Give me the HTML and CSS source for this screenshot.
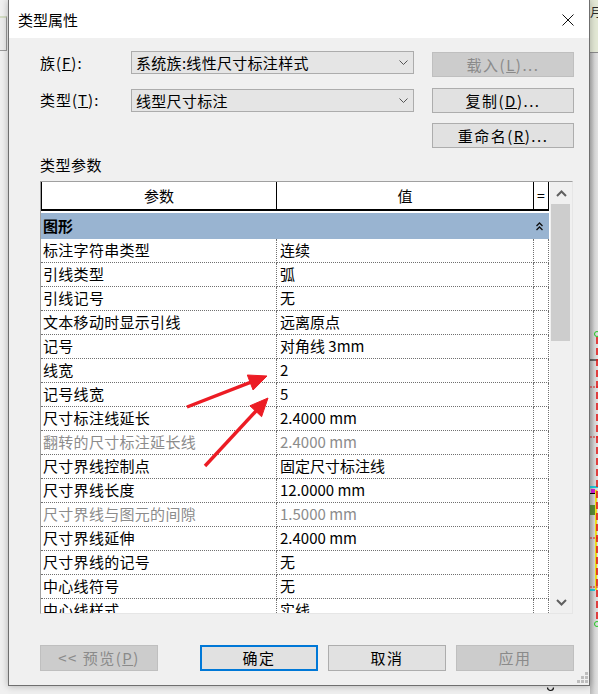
FILE: index.html
```html
<!DOCTYPE html>
<html lang="zh-CN">
<head>
<meta charset="utf-8">
<title>类型属性</title>
<link rel="stylesheet" href="styles.css">
</head>
<body>
<div class="screen">
  <div class="bg-left"><div class="bg-left-box"></div></div>
  <div class="bg-right">
    <div class="bg-right-top"><span class="bg-char">月</span></div>
    <svg class="bg-right-canvas" width="8" height="641" viewBox="0 0 8 641">
      <line x1="0" y1="307" x2="8" y2="307" stroke="#000" stroke-width="1"/>
      <line x1="0" y1="334" x2="8" y2="334" stroke="#e02020" stroke-width="1" stroke-dasharray="2 1"/>
      <line x1="0" y1="384" x2="8" y2="384" stroke="#e02020" stroke-width="1" stroke-dasharray="2 1"/>
      <circle cx="7" cy="281" r="2.5" fill="none" stroke="#22cc22" stroke-width="1"/>
      <rect x="0" y="433" width="8" height="2" fill="#22c8d8"/>
      <rect x="1" y="436" width="4" height="4" fill="#d020d0"/>
      <rect x="0" y="440" width="6" height="1" fill="#000"/>
      <rect x="0" y="452" width="5" height="10" fill="#5a8a3a"/>
      <line x1="6" y1="437" x2="6" y2="537" stroke="#f0e020" stroke-width="2"/>
      <line x1="0" y1="485" x2="8" y2="485" stroke="#e02020" stroke-width="1" stroke-dasharray="2 1"/>
      <line x1="0" y1="534" x2="8" y2="534" stroke="#e02020" stroke-width="1" stroke-dasharray="2 1"/>
      <rect x="0" y="536" width="5" height="2" fill="#22c8d8"/>
      <line x1="7" y1="284" x2="7" y2="568" stroke="#e01818" stroke-width="1.6" stroke-dasharray="7 4"/>
      <circle cx="7" cy="571" r="2.5" fill="none" stroke="#22cc22" stroke-width="1"/>
    </svg>
  </div>
  <svg class="bg-mark" width="9" height="8" viewBox="0 0 9 8"><path d="M1.5 1.5 A3 3 0 1 0 7.5 1.5" fill="none" stroke="#111" stroke-width="1.2"/></svg>

  <div class="dialog">
    <div class="titlebar">
      <span class="title">类型属性</span>
      <svg class="close" width="12" height="12" viewBox="0 0 12 12"><path d="M0.5 0.5 L11.5 11.5 M11.5 0.5 L0.5 11.5" stroke="#111" stroke-width="1" fill="none"/></svg>
    </div>
    <div class="content">
      <div class="form-row">
        <span class="lbl">族(<u>F</u>):</span>
        <div class="combo"><span class="combo-text">系统族:线性尺寸标注样式</span><svg class="chev" width="9" height="5" viewBox="0 0 9 5"><path d="M0.5 0.5 L4.5 4.5 L8.5 0.5" fill="none" stroke="#555" stroke-width="1"/></svg></div>
        <button class="btn btn-row disabled">载入(<u>L</u>)...</button>
      </div>
      <div class="form-row row2">
        <span class="lbl">类型(<u>T</u>):</span>
        <div class="combo"><span class="combo-text">线型尺寸标注</span><svg class="chev" width="9" height="5" viewBox="0 0 9 5"><path d="M0.5 0.5 L4.5 4.5 L8.5 0.5" fill="none" stroke="#555" stroke-width="1"/></svg></div>
        <button class="btn btn-row first">复制(<u>D</u>)...</button>
      </div>
      <div class="form-row row3">
        <button class="btn btn-row col3 first">重命名(<u>R</u>)...</button>
      </div>
      <div class="section-label">类型参数</div>

      <div class="grid">
        <div class="grid-main">
          <div class="grid-head">
            <div class="hcell h1">参数</div>
            <div class="hcell h2">值</div>
            <div class="hcell h3">=</div>
          </div>
          <div class="grid-body">
            <div class="group-row">
              <span class="group-name">图形</span>
              <svg class="collapse" width="7" height="9" viewBox="0 0 7 9"><path d="M0.5 4 L3.5 1 L6.5 4 M0.5 8 L3.5 5 L6.5 8" fill="none" stroke="#111" stroke-width="1.3"/></svg>
            </div>
            <div class="prow"><div class="c1">标注字符串类型</div><div class="c2">连续</div><div class="c3"></div></div>
            <div class="prow"><div class="c1">引线类型</div><div class="c2">弧</div><div class="c3"></div></div>
            <div class="prow"><div class="c1">引线记号</div><div class="c2">无</div><div class="c3"></div></div>
            <div class="prow"><div class="c1">文本移动时显示引线</div><div class="c2">远离原点</div><div class="c3"></div></div>
            <div class="prow"><div class="c1">记号</div><div class="c2">对角线 3mm</div><div class="c3"></div></div>
            <div class="prow"><div class="c1">线宽</div><div class="c2">2</div><div class="c3"></div></div>
            <div class="prow"><div class="c1">记号线宽</div><div class="c2">5</div><div class="c3"></div></div>
            <div class="prow"><div class="c1">尺寸标注线延长</div><div class="c2">2.4000 mm</div><div class="c3"></div></div>
            <div class="prow dim"><div class="c1">翻转的尺寸标注延长线</div><div class="c2">2.4000 mm</div><div class="c3"></div></div>
            <div class="prow"><div class="c1">尺寸界线控制点</div><div class="c2">固定尺寸标注线</div><div class="c3"></div></div>
            <div class="prow"><div class="c1">尺寸界线长度</div><div class="c2">12.0000 mm</div><div class="c3"></div></div>
            <div class="prow dim"><div class="c1">尺寸界线与图元的间隙</div><div class="c2">1.5000 mm</div><div class="c3"></div></div>
            <div class="prow"><div class="c1">尺寸界线延伸</div><div class="c2">2.4000 mm</div><div class="c3"></div></div>
            <div class="prow"><div class="c1">尺寸界线的记号</div><div class="c2">无</div><div class="c3"></div></div>
            <div class="prow"><div class="c1">中心线符号</div><div class="c2">无</div><div class="c3"></div></div>
            <div class="prow"><div class="c1">中心线样式</div><div class="c2">实线</div><div class="c3"></div></div>
          </div>
        </div>
        <div class="vscroll">
          <div class="sbtn"><svg width="11" height="7" viewBox="0 0 11 7"><path d="M1 6 L5.5 1.5 L10 6" fill="none" stroke="#606060" stroke-width="2"/></svg></div>
          <div class="strack"><div class="thumb"></div></div>
          <div class="sbtn"><svg width="11" height="7" viewBox="0 0 11 7"><path d="M1 1 L5.5 5.5 L10 1" fill="none" stroke="#606060" stroke-width="2"/></svg></div>
        </div>
      </div>

      <div class="footer">
        <button class="btn disabled">&lt;&lt; 预览(<u>P</u>)</button>
        <button class="btn default">确定</button>
        <button class="btn">取消</button>
        <button class="btn disabled">应用</button>
      </div>
    </div>
    <svg class="grip" width="11" height="11" viewBox="0 0 11 11" fill="#bdbdbd">
      <rect x="8" y="0" width="3" height="3"/>
      <rect x="4" y="4" width="3" height="3"/><rect x="8" y="4" width="3" height="3"/>
      <rect x="0" y="8" width="3" height="3"/><rect x="4" y="8" width="3" height="3"/><rect x="8" y="8" width="3" height="3"/>
    </svg>
  </div>

  <svg class="arrows" width="598" height="694" viewBox="0 0 598 694">
    <g fill="#ec1c24" stroke="#ec1c24">
      <line x1="187" y1="407" x2="251" y2="382.2" stroke-width="3.4"/>
      <polygon points="267,376 253.1,390 247.3,375" stroke-width="1" stroke-linejoin="round"/>
      <line x1="205" y1="466" x2="256.5" y2="410.5" stroke-width="3.4"/>
      <polygon points="268,398 261.6,416.7 249.9,405.8" stroke-width="1" stroke-linejoin="round"/>
    </g>
  </svg>
</div>
</body>
</html>
```

FILE: styles.css
```css
* { box-sizing: border-box; }

html, body {
  margin: 0;
  padding: 0;
}

body {
  width: 598px;
  height: 694px;
  overflow: hidden;
  background: #eeeeee;
  font-family: "Noto Sans CJK SC", "Microsoft YaHei", sans-serif;
  color: #000;
}

.screen {
  position: relative;
  width: 598px;
  height: 694px;
  overflow: hidden;
  background: #efefef;
}

/* ---------- desktop behind the dialog ---------- */
.bg-left {
  position: absolute;
  left: 0;
  top: 0;
  width: 8px;
  height: 694px;
  background: #f0f0f0;
}

.bg-left-box {
  margin-top: 16px;
  width: 7px;
  height: 35px;
  background: #ececec;
  border-top: 2px solid #d3dcc4;
  border-right: 1px solid #9a9a9a;
  border-bottom: 1px solid #9a9a9a;
}

.bg-right {
  position: absolute;
  left: 590px;
  top: 0;
  width: 8px;
  height: 694px;
  background: linear-gradient(to right, #b8b8b8, #d8d8d8 60%, #e2e2e2);
}

.bg-right-top {
  height: 53px;
  background: #e3e8d5;
  border-bottom: 1px solid #8a8a8a;
  overflow: hidden;
}

.bg-char {
  display: block;
  margin-top: 5px;
  font-size: 12px;
  line-height: 14px;
  color: #2a2a2a;
}

.bg-right-canvas {
  display: block;
}

.bg-mark {
  position: absolute;
  left: 546px;
  top: 686px;
}

/* ---------- dialog ---------- */
.dialog {
  position: absolute;
  left: 8px;
  top: 0;
  width: 582px;
  height: 686px;
  background: #f0f0f0;
  border: 1px solid #6f6f6f;
  border-top: none;
  box-shadow: 0 0 7px rgba(0, 0, 0, 0.28);
  display: flex;
  flex-direction: column;
}

.titlebar {
  height: 38px;
  background: #ffffff;
  display: flex;
  align-items: center;
  padding-left: 9px;
  padding-right: 15px;
}

.title {
  font-size: 15px;
  line-height: 20px;
  margin-top: 1px;
}

.close {
  margin-left: auto;
  margin-top: 1px;
}

.content {
  padding: 13px 15px 0 31px;
  display: flex;
  flex-direction: column;
}

.form-row {
  display: grid;
  grid-template-columns: 91px 283px 160px;
  column-gap: 0;
  align-items: start;
  font-size: 15px;
}

.row2 { margin-top: 11px; }
.row3 { margin-top: 10px; }

.lbl {
  line-height: 23px;
  letter-spacing: 1px;
}

.combo {
  height: 23px;
  background: #e5e5e5;
  border: 1px solid #acacac;
  display: flex;
  align-items: center;
  padding-left: 4px;
  padding-right: 5px;
}

.row2 .combo { margin-top: 1px; }

.combo-text {
  font-size: 15px;
  line-height: 20px;
  letter-spacing: 0.3px;
  flex: 1;
  white-space: nowrap;
  overflow: hidden;
}

.chev { flex: none; }

.btn {
  width: 118px;
  height: 26px;
  padding: 0;
  background: #e1e1e1;
  border: 1px solid #adadad;
  font-family: "Noto Sans CJK SC", "Microsoft YaHei", sans-serif;
  font-size: 15px;
  line-height: 22px;
  letter-spacing: 1.5px;
  color: #000;
  text-align: center;
}

.btn-row {
  width: 142px;
  height: 25px;
  margin-top: 1px;
  margin-left: 18px;
}

.btn-row.first { margin-top: 0; }

.col3 { grid-column: 3; }

.btn.disabled {
  background: #cccccc;
  border-color: #bfbfbf;
  color: #8a8a8a;
}

.btn.default {
  border: 2px solid #0078d7;
  line-height: 20px;
}

.section-label {
  margin-top: 8px;
  height: 18px;
  font-size: 15px;
  line-height: 18px;
  letter-spacing: 0.5px;
}

/* ---------- property grid ---------- */
.grid {
  margin-top: 7px;
  width: 533px;
  height: 433px;
  border: 1px solid;
  border-color: #a0a0a0 #e6e6e6 #e6e6e6 #a0a0a0;
  background: #ffffff;
  display: flex;
  overflow: hidden;
}

.grid-main {
  width: 508px;
  flex: none;
  display: flex;
  flex-direction: column;
  overflow: hidden;
}

.grid-head {
  display: grid;
  grid-template-columns: 236px 257px 15px;
  height: 29px;
  flex: none;
  background: #ffffff;
  border-bottom: 2px solid #000;
}

.hcell {
  border-right: 1px solid #000;
  font-size: 15px;
  line-height: 27px;
  text-align: center;
}

.h1 { border-left: 1px solid #000; }

.h3 {
  font-size: 14px;
  text-align: center;
}

.grid-body {
  padding-top: 2px;
  flex: 1;
  overflow: hidden;
}

.group-row {
  height: 26px;
  background: #99b4d1;
  display: flex;
  align-items: center;
  padding-left: 2px;
  padding-right: 6px;
}

.group-name {
  font-size: 15px;
  font-weight: bold;
  line-height: 20px;
  flex: 1;
}

.prow {
  display: grid;
  grid-template-columns: 236px 257px 15px;
  height: 24px;
  font-size: 15px;
}

.prow > div {
  border-right: 1px dotted #707070;
  border-bottom: 1px dotted #707070;
  line-height: 22px;
  white-space: nowrap;
  overflow: hidden;
}

.c1 { padding-left: 2px; letter-spacing: 0.3px; }
.c2 { padding-left: 3px; }

.prow.dim { color: #8c8c8c; }

.vscroll {
  width: 23px;
  flex: none;
  background: #f0f0f0;
  display: flex;
  flex-direction: column;
  border-left: 1px solid #ffffff;
}

.sbtn {
  height: 22px;
  flex: none;
  display: flex;
  align-items: center;
  justify-content: center;
}

.strack {
  flex: 1;
  padding: 0 2px 0 1px;
}

.thumb {
  height: 137px;
  background: #cdcdcd;
}

/* ---------- footer ---------- */
.footer {
  margin-top: 31px;
  display: flex;
  gap: 10px;
}

.footer .btn:first-child { margin-right: 32px; }

.grip {
  position: absolute;
  right: 1px;
  bottom: 2px;
}

.arrows {
  position: absolute;
  left: 0;
  top: 0;
  pointer-events: none;
}
```
